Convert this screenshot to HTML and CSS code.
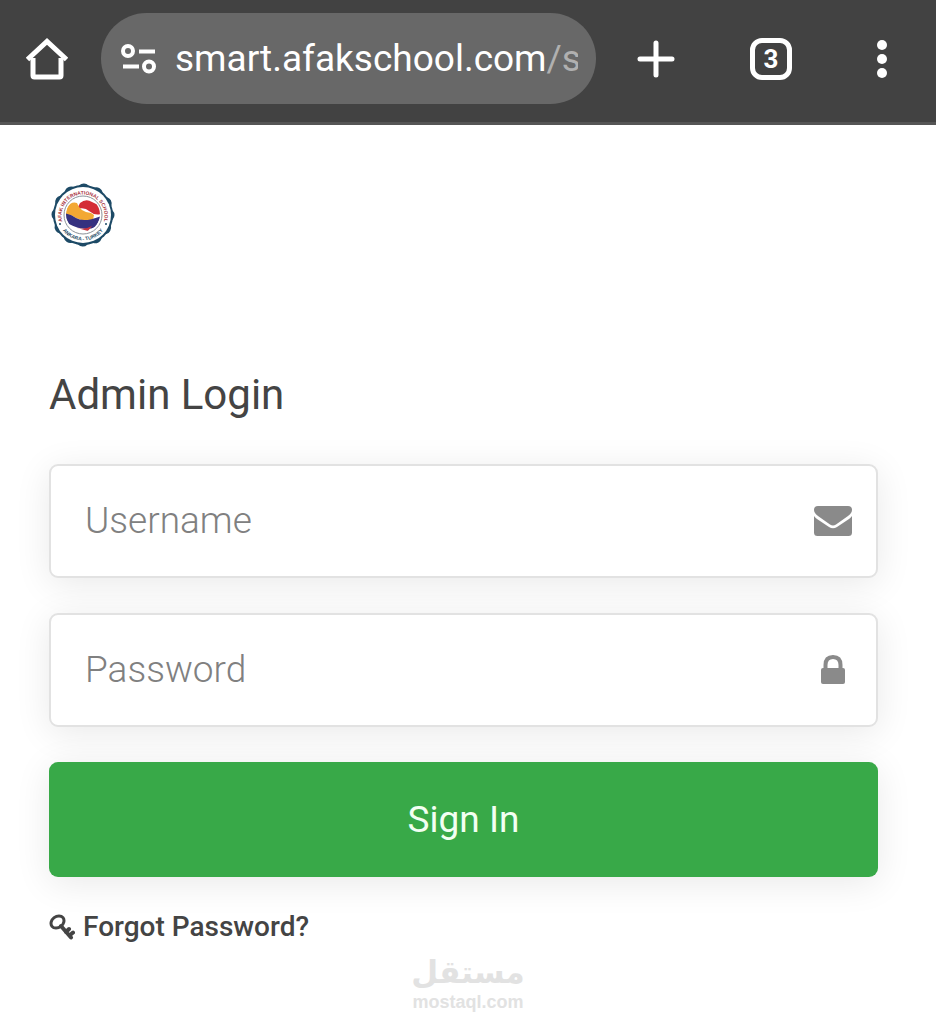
FILE: index.html
```html
<!DOCTYPE html>
<html lang="en">
<head>
  <meta charset="UTF-8">
  <meta name="viewport" content="width=device-width, initial-scale=1.0">
  <title>Admin Login</title>
  <link rel="stylesheet" href="styles.css">
</head>
<body>
  <header class="toolbar">
    <button class="tool tool-home" aria-label="Home">
      <svg width="42" height="42" viewBox="0 0 42 42" fill="none" stroke="#fff" stroke-width="5" stroke-linejoin="round">
        <path d="M7 20V37.500Q7 39 8.500 39H33.500Q35 39 35 37.500V20"/>
        <path d="M1.500 21.500L21 3.500L40.500 21.500" stroke-linejoin="miter"/>
      </svg>
    </button>
    <div class="address">
      <svg class="site-icon" width="36" height="30" viewBox="0 0 36 30" fill="none" stroke="#fff" stroke-width="4">
        <circle cx="7" cy="7" r="5"/>
        <path d="M18 7.500H34M2 22.500H18"/>
        <circle cx="28" cy="22.500" r="5"/>
      </svg>
      <a class="url" href="#">smart.afakschool.com<span class="path">/sm</span></a>
    </div>
    <button class="tool tool-new" aria-label="New tab">
      <svg width="38" height="38" viewBox="0 0 38 38" stroke="#fff" stroke-width="5" stroke-linecap="round">
        <path d="M19 3V35M3 19H35"/>
      </svg>
    </button>
    <button class="tool tool-tabs" aria-label="Tabs"><span class="tab-count">3</span></button>
    <button class="tool tool-menu" aria-label="Menu">
      <svg width="10" height="38" viewBox="0 0 10 38" fill="#fff">
        <circle cx="5" cy="5" r="5"/>
        <circle cx="5" cy="19" r="5"/>
        <circle cx="5" cy="33" r="5"/>
      </svg>
    </button>
  </header>

  <main class="login">
    <svg class="logo" width="68" height="68" viewBox="0 0 68 68" role="img" aria-label="Afak International School">
      <defs>
        <path id="arc-top" d="M15 45A21.500 21.500 0 1 1 53 45"/>
        <path id="arc-bottom" d="M9 39A25.500 25.500 0 0 0 59 39"/>
        <clipPath id="ball"><circle cx="34" cy="33.500" r="17"/></clipPath>
      </defs>
      <circle cx="34" cy="34" r="30" fill="#1d4a66"/>
      <circle cx="34" cy="34" r="25" fill="none" stroke="#1d4a66" stroke-width="13" stroke-linecap="round" stroke-dasharray="0.1 12.990"/>
      <circle cx="34" cy="34" r="28" fill="#fff"/>
      <circle cx="34" cy="34" r="19" fill="#fff" stroke="#8b9299" stroke-width="1"/>
      <g clip-path="url(#ball)">
        <path d="M31 22Q37 17 43 21Q48 24 52 23L52 33Q46 35 40 30Q36 26 28 28Z" fill="#d42c35"/>
        <path d="M18 27Q22 20 28 22Q31 31 42 32L45 34L44 39Q35 41 27 37Q22 33 16 34Z" fill="#f3a833"/>
        <path d="M14 32Q22 33 27 37Q35 42 52 35L47 46Q35 51 20 43Z" fill="#35317f"/>
        <path d="M28 47Q36 49 43 45L39 50Z" fill="#c7353e"/>
      </g>
      <text class="logo-top"><textPath href="#arc-top" startOffset="50%">AFAK INTERNATIONAL SCHOOL</textPath></text>
      <text class="logo-bottom"><textPath href="#arc-bottom" startOffset="50%">ANKARA - TURKEY</textPath></text>
      <circle cx="11" cy="43" r="1" fill="#1d4a66"/>
      <circle cx="57" cy="43" r="1" fill="#1d4a66"/>
    </svg>

    <h1 class="title">Admin Login</h1>

    <form class="login-form">
      <div class="field">
        <input type="text" id="username" placeholder="Username" aria-label="Username">
        <label class="field-icon" for="username">
          <svg width="38" height="30" viewBox="0 0 38 30" fill="#8a8a8a">
            <path d="M4 0H34Q38 0 38 4Q38 7 34 10L22 18.500Q19 20.500 16 18.500L4 10Q0 7 0 4Q0 0 4 0Z"/>
            <path d="M0 10Q1 11.500 3 13L15 21Q19 23.500 23 21L35 13Q37 11.500 38 10V26.500Q38 30 34.500 30H3.500Q0 30 0 26.500Z"/>
          </svg>
        </label>
      </div>
      <div class="field">
        <input type="password" id="password" placeholder="Password" aria-label="Password">
        <label class="field-icon" for="password">
          <svg width="38" height="30" viewBox="0 0 38 30">
            <path d="M11.500 15V10Q11.500 2 19 2Q26.500 2 26.500 10V15" fill="none" stroke="#8a8a8a" stroke-width="4"/>
            <rect x="7" y="13" width="24" height="16" rx="2" fill="#8a8a8a"/>
          </svg>
        </label>
      </div>
      <button type="submit" class="sign-in">Sign In</button>
    </form>

    <a class="forgot" href="#">
      <svg width="26" height="26" viewBox="0 0 26 26" fill="none" stroke="#444" stroke-width="3" stroke-linecap="round">
        <ellipse cx="8.500" cy="8" rx="7" ry="5.500" transform="rotate(-38 8.500 8)"/>
        <path d="M12 12L22 23.500M17 18L20 15M20.500 21.500L24 18.500" stroke-width="4"/>
      </svg>
      Forgot Password?
    </a>
  </main>

  <footer class="watermark">
    <span class="mark-ar" lang="ar" dir="rtl">مستقل</span>
    <span class="mark-en">mostaql.com</span>
  </footer>
</body>
</html>
```
FILE: styles.css
```css
* {
  box-sizing: border-box;
}

body {
  margin: 0;
  background: #fff;
  color: #444;
  font-family: Roboto, "Liberation Sans", sans-serif;
}

.toolbar {
  display: flex;
  align-items: center;
  padding: 13px 0 18px;
  background: #424242;
  border-bottom: 3px solid #555;
}

.tool {
  display: flex;
  align-items: center;
  justify-content: center;
  height: 91px;
  padding: 0;
  border: none;
  background: none;
  color: #fff;
  cursor: pointer;
}

.tool-home {
  width: 101px;
  padding-right: 8px;
}

.tool-new {
  width: 119px;
}

.tool-tabs {
  width: 112px;
}

.tool-menu {
  width: 109px;
}

.tab-count {
  width: 42px;
  height: 42px;
  border: 5px solid #fff;
  border-radius: 12px;
  font: 700 26px/32px Roboto, sans-serif;
}

.address {
  flex: 1;
  min-width: 0;
  display: flex;
  align-items: center;
  gap: 18px;
  height: 91px;
  padding: 0 18px 0 20px;
  border-radius: 46px;
  background: #686868;
}

.site-icon {
  flex: none;
}

.url {
  flex: 1;
  min-width: 0;
  overflow: hidden;
  color: #fff;
  font-size: 37px;
  line-height: 48px;
  white-space: nowrap;
  text-decoration: none;
}

.path {
  color: #b0b0b0;
}

.login {
  padding: 56px 58px 0 49px;
}

.logo {
  display: block;
}

.logo-top,
.logo-bottom {
  font-family: "Liberation Sans", sans-serif;
  font-size: 5px;
  font-weight: 700;
  text-anchor: middle;
}

.logo-top {
  fill: #a8323c;
}

.logo-bottom {
  fill: #1d4a66;
}

.title {
  margin: 121px 0 44px;
  font-size: 42px;
  line-height: 50px;
  font-weight: 400;
}

.login-form {
  display: flex;
  flex-direction: column;
  gap: 35px;
}

.field {
  display: flex;
  align-items: center;
  height: 114px;
  padding: 0 24px 0 34px;
  border: 2px solid #e2e2e2;
  border-radius: 9px;
  background: #fff;
  box-shadow: 0 6px 36px rgba(0, 0, 0, 0.09);
}

.field input {
  flex: 1;
  min-width: 0;
  height: 100%;
  padding: 0 0 2px;
  border: none;
  outline: none;
  background: none;
  color: #444;
  font: 300 37px Roboto, sans-serif;
}

.field input::placeholder {
  color: #808080;
  opacity: 1;
}

.field-icon {
  display: flex;
}

.sign-in {
  height: 115px;
  border: none;
  border-radius: 9px;
  background: #38a948;
  color: #f2fff2;
  font: 400 37px Roboto, sans-serif;
  box-shadow: 0 6px 36px rgba(0, 0, 0, 0.09);
  cursor: pointer;
}

.forgot {
  display: inline-flex;
  align-items: center;
  gap: 8px;
  margin-top: 34px;
  color: #444;
  font-size: 28px;
  line-height: 32px;
  font-weight: 500;
  text-decoration: none;
}

.watermark {
  display: flex;
  flex-direction: column;
  align-items: center;
  margin-top: 8px;
  color: #e2e2e2;
}

.mark-ar {
  font: 700 31px/40px "DejaVu Sans", sans-serif;
}

.mark-en {
  font: 700 18px/20px "Liberation Sans", sans-serif;
}
```
